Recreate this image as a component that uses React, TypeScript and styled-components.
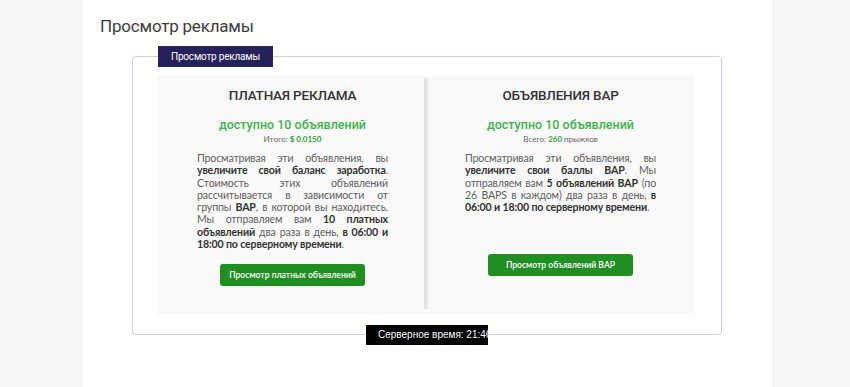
import styled, { createGlobalStyle } from 'styled-components';

const GlobalStyle = createGlobalStyle`
  html, body { margin: 0; padding: 0; background: #f6f8fa; }
  body { font-family: Lato, "Noto Sans", sans-serif; }
  * { box-sizing: border-box; }
`

const Page = styled.div`
  display: flex;
  justify-content: flex-start;
  padding-left: 81px;
  height: 387px;
`

const Panel = styled.main`
  width: 692px;
  height: 387px;
  background: #fff;
  border-left: 1px solid #eceef2;
  border-right: 1px solid #eceef2;
  padding: 16px 0 0 18px;
`

const Title = styled.h2`
  margin: 0;
  font-family: Roboto, "Noto Sans", sans-serif;
  font-size: 17px;
  font-weight: 400;
  color: #3d3d3d;
  letter-spacing: -0.2px;
`

const Frame = styled.section`
  position: relative;
  margin: 20px 0 0 32px;
  width: 590px;
  height: 279px;
  border: 1px solid #cfcfe3;
  border-radius: 4px;
  padding: 18px 26px 19px 25px;
`

const Legend = styled.div`
  position: absolute;
  top: -11px;
  left: 25px;
  height: 21px;
  padding: 0 13px;
  display: flex;
  align-items: center;
  background: #25215a;
  color: #fff;
  font-size: 10px;
  font-family: Roboto, "Noto Sans", sans-serif;
  letter-spacing: -0.2px;
`

const Inner = styled.div`
  display: grid;
  grid-template-columns: 266px 270px;
  height: 100%;
  background: #f9f9f9;
`

const Column = styled.div<{ $divider?: boolean }>`
  display: flex;
  flex-direction: column;
  align-items: center;
  padding: 12px 37px 0 40px;
  ${p => p.$divider && `
    border-left: 3px solid #e3e3e3;
    box-shadow: inset 1px 0 2px rgba(0,0,0,0.06);
    margin: 3px 0 6px;
    padding: 9px 38px 0 38px;
  `}
`

const Heading = styled.h3`
  margin: 0;
  font-family: Roboto, "Noto Sans", sans-serif;
  font-size: 13.5px;
  font-weight: 500;
  color: #333;
  letter-spacing: -0.2px;
`

const Available = styled.div`
  margin-top: 14px;
  font-family: Roboto, "Noto Sans", sans-serif;
  font-size: 12.5px;
  font-weight: 500;
  color: #3fb34f;
`

const Total = styled.div`
  margin-top: 2px;
  font-size: 8px;
  color: #666;
  b { color: #2f9e3e; font-weight: 700; }
`

const Text = styled.p`
  margin: 8px 0 0;
  width: 191px;
  font-size: 10.6px;
  letter-spacing: -0.15px;
  line-height: 12.3px;
  color: #5e5e5e;
  text-align: justify;
  b { color: #333; font-weight: 700; }
`

const Button = styled.button<{ $gap: number }>`
  margin-top: ${p => p.$gap}px;
  width: 145px;
  height: 22px;
  border: none;
  border-radius: 3px;
  background: #1f8f22;
  color: #fff;
  font-family: Lato, "Noto Sans", sans-serif;
  font-size: 8.6px;
  font-weight: 600;
  white-space: nowrap;
`

const ServerTime = styled.div`
  position: absolute;
  left: 233px;
  bottom: -11px;
  width: 122px;
  height: 20px;
  overflow: hidden;
  white-space: nowrap;
  background: #000;
  color: #fff;
  font-family: "Liberation Sans", Arial, sans-serif;
  font-size: 10px;
  line-height: 20px;
  padding-left: 12px;
`

const App = () => {
  return (
    <>
      <GlobalStyle />
      <Page>
        <Panel>
          <Title>Просмотр рекламы</Title>
          <Frame>
            <Legend>Просмотр рекламы</Legend>
            <Inner>
              <Column>
                <Heading>ПЛАТНАЯ РЕКЛАМА</Heading>
                <Available>доступно 10 объявлений</Available>
                <Total>Итого: <b>$ 0.0150</b></Total>
                <Text>
                  Просматривая эти объявления, вы <b>увеличите свой баланс заработка</b>.
                  Стоимость этих объявлений рассчитывается в зависимости от группы <b>BAP</b>,
                  в которой вы находитесь. Мы отправляем вам <b>10 платных объявлений</b> два
                  раза в день, <b>в 06:00 и 18:00 по серверному времени</b>.
                </Text>
                <Button $gap={14}>Просмотр платных объявлений</Button>
              </Column>
              <Column $divider>
                <Heading>ОБЪЯВЛЕНИЯ BAP</Heading>
                <Available>доступно 10 объявлений</Available>
                <Total>Всего: <b>260</b> прыжков</Total>
                <Text>
                  Просматривая эти объявления, вы <b>увеличите свои баллы BAP</b>. Мы
                  отправляем вам <b>5 объявлений BAP</b> (по 26 BAPS в каждом) два раза в
                  день, <b>в 06:00 и 18:00 по серверному времени</b>.
                </Text>
                <Button $gap={41}>Просмотр объявлений BAP</Button>
              </Column>
            </Inner>
            <ServerTime>Серверное время: 21:46:03</ServerTime>
          </Frame>
        </Panel>
      </Page>
    </>
  );
};

export default App;
